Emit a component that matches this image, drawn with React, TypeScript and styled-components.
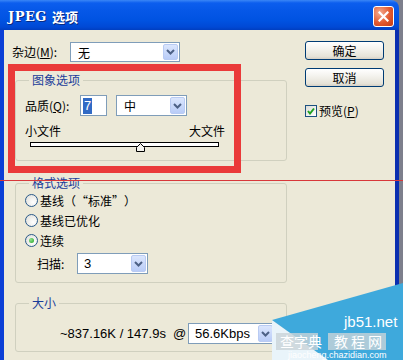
import React from "react";
import styled, { createGlobalStyle } from "styled-components";

const CJK = `"Noto Sans CJK SC", "Liberation Sans", sans-serif`;
const LATIN = `"Liberation Sans", "Noto Sans CJK SC", sans-serif`;

const GlobalStyle = createGlobalStyle`
  html, body { margin: 0; padding: 0; }
  body {
    width: 403px; height: 360px; overflow: hidden; background: #7d7f8c;
    font-family: ${CJK}; font-size: 12px; color: #000;
  }
  * { box-sizing: border-box; }
`;

const Page = styled.div`
  position: relative;
  width: 403px;
  height: 360px;
  display: flex;
  background: #7d7f8c;
  overflow: hidden;
`;

const Window = styled.div`
  width: 399px;
  display: flex;
  flex-direction: column;
`;

const TitleBar = styled.div`
  height: 30px;
  flex: none;
  display: flex;
  align-items: center;
  justify-content: space-between;
  padding: 3px 5px 0 8px;
  border-radius: 0 8px 0 0;
  background: linear-gradient(
    to bottom,
    #3a86f6 0px,
    #0c5eee 3px,
    #0658e8 10px,
    #0053e2 20px,
    #0049d5 27px,
    #003ec0 30px
  );
`;

const Title = styled.div`
  display: flex;
  align-items: center;
  gap: 5px;
  color: #fff;
  font-weight: bold;
  text-shadow: 1px 1px 0 #0a2a80;
`;

const TitleLatin = styled.span`
  font-family: "DejaVu Serif", serif;
  font-size: 13px;
  letter-spacing: 0.5px;
`;

const TitleCJK = styled.span`
  font-family: ${CJK};
  font-size: 13px;
`;

const CloseButton = styled.div`
  width: 21px;
  height: 21px;
  border: 1px solid #fff;
  border-radius: 3px;
  background: radial-gradient(circle at 30% 30%, #f4ab90, #e2592f 55%, #c23b14);
  display: flex;
  align-items: center;
  justify-content: center;
`;

const Body = styled.div`
  flex: 1;
  display: flex;
  background: #ece9d8;
  border-left: 4px solid #0b3fd6;
  border-right: 4px solid #0a2eb0;
`;

const LeftColumn = styled.div`
  width: 286px;
  flex: none;
  padding: 12px 0 0 8px;
  display: flex;
  flex-direction: column;
`;

const RightColumn = styled.div`
  flex: 1;
  padding: 11px 0 0 15px;
  display: flex;
  flex-direction: column;
  align-items: flex-start;
`;

const Row = styled.div<{ $top?: number; $left?: number; $h?: number }>`
  display: flex;
  align-items: center;
  height: ${(p) => p.$h ?? 21}px;
  margin-top: ${(p) => p.$top ?? 0}px;
  margin-left: ${(p) => p.$left ?? 0}px;
`;

const Label = styled.span<{ $w: number }>`
  width: ${(p) => p.$w}px;
  flex: none;
  white-space: nowrap;
  line-height: 14px;
`;

const Group = styled.div<{ $top: number; $bottom: number }>`
  margin: ${(p) => p.$top}px 0 0 3px;
  width: 272px;
  border: 1px solid #d0d0bf;
  border-radius: 3px;
  padding: 0 0 ${(p) => p.$bottom}px 9px;
  display: flex;
  flex-direction: column;
  align-items: flex-start;
`;

const Legend = styled.div`
  margin: -8px 0 0 4px;
  padding: 0 3px;
  background: #ece9d8;
  line-height: 14px;
  color: #1b3d9a;
`;

const ComboBox = styled.div<{ $w: number; $h?: number; $gap?: number }>`
  width: ${(p) => p.$w}px;
  height: ${(p) => p.$h ?? 21}px;
  margin-left: ${(p) => p.$gap ?? 0}px;
  flex: none;
  border: 1px solid #7f9db9;
  background: #fff;
  display: flex;
  align-items: center;
  padding: 1px;
`;

const ComboText = styled.span<{ $latin?: boolean }>`
  flex: 1;
  padding-left: ${(p) => (p.$latin ? 5 : 6)}px;
  font-family: ${(p) => (p.$latin ? LATIN : CJK)};
  font-size: ${(p) => (p.$latin ? 13 : 12)}px;
`;

const ComboArrow = styled.div`
  width: 15px;
  align-self: stretch;
  border-radius: 2px;
  border: 1px solid #b9cbf3;
  background: linear-gradient(#dbe6fd, #b9ccf7);
  display: flex;
  align-items: center;
  justify-content: center;
`;

const TextInput = styled.div`
  width: 27px;
  height: 21px;
  flex: none;
  border: 1px solid #7f9db9;
  background: #fff;
  padding: 1px 0 1px 2px;
  display: flex;
  align-items: center;
`;

const Selection = styled.span`
  background: #316ac5;
  color: #fff;
  font-family: ${LATIN};
  font-size: 13px;
  line-height: 16px;
  padding: 0 1px;
`;

const SizeLabels = styled.div`
  width: 200px;
  margin-top: 8px;
  display: flex;
  justify-content: space-between;
  line-height: 14px;
`;

const Track = styled.div`
  position: relative;
  width: 189px;
  height: 5px;
  margin: 4px 0 0 5px;
  border: 1px solid #000;
  background: #fff;
`;

const Thumb = styled.svg`
  position: absolute;
  left: 105px;
  top: 0px;
`;

const RadioRow = styled.div`
  display: flex;
  align-items: center;
  height: 20px;
  gap: 2px;
`;

const RadioText = styled.span`
  text-spacing-trim: space-all;
  white-space: nowrap;
`;

const RadioCircle = styled.div<{ $checked?: boolean }>`
  width: 13px;
  height: 13px;
  border-radius: 50%;
  border: 1px solid #2a5a8a;
  background: radial-gradient(circle at 65% 65%, #ffffff, #dcdcd6);
  display: flex;
  align-items: center;
  justify-content: center;
  &::after {
    content: "";
    display: ${(p) => (p.$checked ? "block" : "none")};
    width: 5px;
    height: 5px;
    border-radius: 50%;
    background: radial-gradient(circle at 35% 35%, #8fe28f, #21a121);
  }
`;

const SizeText = styled.span`
  width: 128px;
  flex: none;
  margin-left: 35px;
  font-family: ${LATIN};
  font-size: 13px;
  white-space: pre;
`;

const Button = styled.div<{ $top?: number }>`
  width: 79px;
  height: 19px;
  margin-top: ${(p) => p.$top ?? 0}px;
  border: 1px solid #003c74;
  border-radius: 3px;
  background: linear-gradient(#ffffff 0%, #f4f3ee 40%, #e6e3d8 85%, #d6d0c5 100%);
  display: flex;
  align-items: center;
  justify-content: center;
  font-size: 12px;
`;

const CheckRow = styled.div`
  margin-top: 17px;
  display: flex;
  align-items: center;
  gap: 2px;
  height: 13px;
`;

const CheckBox = styled.div`
  width: 12px;
  height: 12px;
  border: 1px solid #1c5180;
  background: linear-gradient(135deg, #dcdcd6, #ffffff);
  display: flex;
  align-items: center;
  justify-content: center;
`;

const RedBox = styled.div`
  position: absolute;
  left: 8px;
  top: 64px;
  width: 233px;
  height: 109px;
  border: 7px solid #ea3a3a;
  pointer-events: none;
`;

const RedLine = styled.div`
  position: absolute;
  left: 0;
  top: 180px;
  width: 403px;
  height: 1px;
  background: #d8383a;
  pointer-events: none;
`;

const Watermark = styled.svg`
  position: absolute;
  left: 268px;
  top: 275px;
  pointer-events: none;
`;

const Arrow = () => (
  <svg width="9" height="6" viewBox="0 0 9 6">
    <polyline points="1,1 4.5,4.5 8,1" fill="none" stroke="#4d6185" strokeWidth="2" />
  </svg>
);

const Combo = ({ w, h, gap, text, latin }: { w: number; h?: number; gap?: number; text: string; latin?: boolean }) => (
  <ComboBox $w={w} $h={h} $gap={gap}>
    <ComboText $latin={latin}>{text}</ComboText>
    <ComboArrow>
      <Arrow />
    </ComboArrow>
  </ComboBox>
);

export default function App() {
  return (
    <>
      <GlobalStyle />
      <Page>
        <Window>
          <TitleBar>
            <Title>
              <TitleLatin>JPEG</TitleLatin>
              <TitleCJK>选项</TitleCJK>
            </Title>
            <CloseButton>
              <svg width="11" height="11" viewBox="0 0 11 11">
                <path d="M1.5 1.5 L9.5 9.5 M9.5 1.5 L1.5 9.5" stroke="#fff" strokeWidth="2.2" strokeLinecap="square" />
              </svg>
            </CloseButton>
          </TitleBar>
          <Body>
            <LeftColumn>
              <Row $h={20}>
                <Label $w={58}>
                  杂边(<u>M</u>):
                </Label>
                <Combo w={110} h={20} text="无" />
              </Row>

              <Group $top={18} $bottom={13}>
                <Legend>图象选项</Legend>
                <Row $top={8}>
                  <Label $w={55}>
                    品质(<u>Q</u>):
                  </Label>
                  <TextInput>
                    <Selection>7</Selection>
                  </TextInput>
                  <Combo w={71} gap={9} text="中" />
                </Row>
                <SizeLabels>
                  <span>小文件</span>
                  <span>大文件</span>
                </SizeLabels>
                <Track>
                  <Thumb width="9" height="9" viewBox="0 0 9 9">
                    <polygon points="0.5,8.5 0.5,4.5 4.5,0.5 8.5,4.5 8.5,8.5" fill="#f4f3ee" stroke="#000" strokeWidth="1" />
                  </Thumb>
                </Track>
              </Group>

              <Group $top={22} $bottom={8}>
                <Legend>格式选项</Legend>
                <RadioRow>
                  <RadioCircle />
                  <RadioText>基线（“标准”）</RadioText>
                </RadioRow>
                <RadioRow>
                  <RadioCircle />
                  <RadioText>基线已优化</RadioText>
                </RadioRow>
                <RadioRow>
                  <RadioCircle $checked />
                  <RadioText>连续</RadioText>
                </RadioRow>
                <Row $top={3} $left={12}>
                  <Label $w={40}>扫描:</Label>
                  <Combo w={71} text="3" latin />
                </Row>
              </Group>

              <Group $top={20} $bottom={7}>
                <Legend>大小</Legend>
                <Row $top={13}>
                  <SizeText>{"~837.16K / 147.9s  @"}</SizeText>
                  <Combo w={87} text="56.6Kbps" latin />
                </Row>
              </Group>
            </LeftColumn>

            <RightColumn>
              <Button>确定</Button>
              <Button $top={8}>取消</Button>
              <CheckRow>
                <CheckBox>
                  <svg width="8" height="8" viewBox="0 0 8 8">
                    <polyline points="1,4 3,6.5 7,1.5" fill="none" stroke="#21a121" strokeWidth="2" />
                  </svg>
                </CheckBox>
                <span>
                  预览(<u>P</u>)
                </span>
              </CheckRow>
            </RightColumn>
          </Body>
        </Window>

        <RedBox />
        <RedLine />

        <Watermark width="135" height="85" viewBox="0 0 135 85">
          <polygon points="4,45 60,85 4,85" fill="#e9f4fa" />
          <polygon points="4,45 135,8 135,85 60,85" fill="#3ea9dc" />
          <rect x="8" y="58" width="42" height="17" fill="#c9d3d8" opacity="0.8" />
          <rect x="60" y="58" width="58" height="17" fill="#c9d3d8" opacity="0.8" />
          <text x="12" y="72" fontSize="14" fill="#ffffff" fontFamily={CJK}>查字典</text>
          <text x="66" y="72" fontSize="14" fill="#ffffff" fontFamily={CJK} letterSpacing="3">教程网</text>
          <text x="76" y="52" fontSize="15" fill="#ffffff" fontFamily={LATIN}>jb51.net</text>
          <text x="20" y="83" fontSize="9" fill="#ffffff" fontFamily={LATIN}>jiaocheng.chazidian.com</text>
        </Watermark>
      </Page>
    </>
  );
}
